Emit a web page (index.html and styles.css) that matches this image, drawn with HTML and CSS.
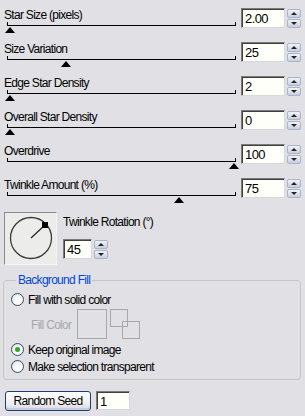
FILE: index.html
```html
<!DOCTYPE html>
<html lang="en">
<head>
    <meta charset="UTF-8">
    <title>Star Effect</title>
    <link rel="stylesheet" href="styles.css">
</head>
<body>
    <div class="panel">
        <div class="row">
            <div class="slider-col">
                <div class="label">Star Size (pixels)</div>
                <div class="track"><span class="thumb" style="left: 3px"></span></div>
            </div>
            <div class="num"><input class="field" type="text" value="2.00"><div class="spin"><span class="up"></span><span class="down"></span></div></div>
        </div>
        <div class="row">
            <div class="slider-col">
                <div class="label">Size Variation</div>
                <div class="track"><span class="thumb" style="left: 59px"></span></div>
            </div>
            <div class="num"><input class="field" type="text" value="25"><div class="spin"><span class="up"></span><span class="down"></span></div></div>
        </div>
        <div class="row">
            <div class="slider-col">
                <div class="label">Edge Star Density</div>
                <div class="track"><span class="thumb" style="left: 3px"></span></div>
            </div>
            <div class="num"><input class="field" type="text" value="2"><div class="spin"><span class="up"></span><span class="down"></span></div></div>
        </div>
        <div class="row">
            <div class="slider-col">
                <div class="label">Overall Star Density</div>
                <div class="track"><span class="thumb" style="left: 3px"></span></div>
            </div>
            <div class="num"><input class="field" type="text" value="0"><div class="spin"><span class="up"></span><span class="down"></span></div></div>
        </div>
        <div class="row">
            <div class="slider-col">
                <div class="label">Overdrive</div>
                <div class="track"><span class="thumb" style="left: 227px"></span></div>
            </div>
            <div class="num"><input class="field" type="text" value="100"><div class="spin"><span class="up"></span><span class="down"></span></div></div>
        </div>
        <div class="row">
            <div class="slider-col">
                <div class="label">Twinkle Amount (%)</div>
                <div class="track"><span class="thumb" style="left: 172px"></span></div>
            </div>
            <div class="num"><input class="field" type="text" value="75"><div class="spin"><span class="up"></span><span class="down"></span></div></div>
        </div>

        <div class="rotation">
            <div class="dial">
                <svg width="51" height="51" viewBox="0 0 51 51">
                    <circle cx="26" cy="25" r="20.5" fill="none" stroke="#3a3a3a" stroke-width="1.3"/>
                    <line x1="26" y1="25" x2="40" y2="12" stroke="#222" stroke-width="1.2"/>
                    <rect x="37" y="9" width="6" height="6" fill="#000"/>
                </svg>
            </div>
            <div class="rotation-ctrl">
                <div class="label">Twinkle Rotation (°)</div>
                <div class="num"><input class="field small" type="text" value="45"><div class="spin"><span class="up"></span><span class="down"></span></div></div>
            </div>
        </div>

        <fieldset class="group">
            <legend>Background Fill</legend>
            <label class="radio"><span class="dot"></span>Fill with solid color</label>
            <div class="fill-row">
                <span class="fill-label">Fill Color</span>
                <span class="swatch"></span>
                <span class="swap"><span class="sq"></span><span class="sq back"></span></span>
            </div>
            <label class="radio"><span class="dot checked"></span>Keep original image</label>
            <label class="radio"><span class="dot"></span>Make selection transparent</label>
        </fieldset>

        <div class="seed">
            <button class="btn">Random Seed</button>
            <input class="field seed-field" type="text" value="1">
        </div>
    </div>
</body>
</html>
```

FILE: styles.css
```css
* {
    margin: 0;
    padding: 0;
    box-sizing: border-box;
}

body {
    background: #e0e0e5;
    font-family: 'Liberation Sans', Arial, sans-serif;
    font-size: 12px;
    letter-spacing: -0.7px;
    color: #000;
}

.panel {
    width: 305px;
    height: 416px;
    padding: 8px 0 0 4px;
}

.row {
    display: flex;
    height: 34px;
}

.slider-col {
    width: 237px;
}

.label {
    height: 14px;
    line-height: 14px;
    white-space: nowrap;
}

.track {
    position: relative;
    margin: 0 0 0 3px;
    width: 229px;
    height: 4px;
    border: 1px solid #000;
    border-top: none;
}

.thumb {
    position: absolute;
    top: 5px;
    margin-left: -6px;
    width: 0;
    height: 0;
    border-left: 5.5px solid transparent;
    border-right: 5.5px solid transparent;
    border-bottom: 6px solid #000;
}

.num {
    display: flex;
    gap: 2px;
    height: 20px;
}

.field {
    width: 44px;
    height: 20px;
    border: 1px solid;
    border-color: #7a7a7a #d8d8d8 #d8d8d8 #7a7a7a;
    box-shadow: inset 1px 1px 0 #404040;
    background: #fffffa;
    font-family: inherit;
    font-size: 13px;
    letter-spacing: -0.6px;
    padding: 1px 0 0 3px;
    outline: none;
}

.field.small {
    width: 29px;
}

.spin {
    display: flex;
    flex-direction: column;
    gap: 1px;
    width: 14px;
    padding-top: 1px;
}

.spin span {
    position: relative;
    height: 9px;
    border: 1px solid #a8b4c8;
    border-radius: 2px;
    background: linear-gradient(#f2f3f8, #c9cfe0);
}

.spin span::after {
    content: "";
    position: absolute;
    left: 3px;
    top: 2px;
    border-left: 3px solid transparent;
    border-right: 3px solid transparent;
}

.spin .up::after {
    border-bottom: 3px solid #222;
}

.spin .down::after {
    border-top: 3px solid #222;
}

.rotation {
    display: flex;
    gap: 6px;
}

.dial {
    width: 53px;
    height: 53px;
    border: 1px solid;
    border-color: #8a8a8a #f4f4f4 #f4f4f4 #8a8a8a;
    background: #ececea;
}

.rotation-ctrl .label {
    margin: 3px 0 10px;
}

.group {
    margin: 9px 0 0 -1px;
    width: 298px;
    height: 106px;
    border: 1px solid #c5c5c2;
    border-radius: 4px;
    padding: 4px 0 0 7px;
}

.group legend {
    margin-left: 5px;
    padding: 0 2px;
    color: #0046d5;
    line-height: 13px;
}

.radio {
    display: flex;
    align-items: center;
    gap: 4px;
    height: 17px;
}

.dot {
    position: relative;
    width: 13px;
    height: 13px;
    border: 1px solid #2c4e6f;
    border-radius: 50%;
    background: radial-gradient(circle at 65% 65%, #fff 0%, #fff 30%, #d8d8d0 100%);
}

.dot.checked::after {
    content: "";
    position: absolute;
    left: 3px;
    top: 3px;
    width: 5px;
    height: 5px;
    border-radius: 50%;
    background: #2ca82c;
}

.fill-row {
    display: flex;
    align-items: flex-start;
    height: 33px;
    padding-top: 1px;
}

.fill-label {
    width: 46px;
    margin: 9px 0 0 20px;
    color: #a8a8a8;
}

.swatch {
    width: 30px;
    height: 30px;
    border: 1px solid #a8a8a8;
}

.swap {
    position: relative;
    width: 30px;
    height: 30px;
    margin-left: 3px;
}

.sq {
    position: absolute;
    left: 0;
    top: 0;
    width: 18px;
    height: 18px;
    border: 1px solid #a8a8a8;
    background: #e0e0e5;
}

.sq.back {
    left: 12px;
    top: 12px;
    background: transparent;
}

.seed {
    display: flex;
    gap: 5px;
    margin: 11px 0 0 1px;
}

.btn {
    width: 86px;
    height: 20px;
    border: 1px solid #1e3f72;
    border-radius: 3px;
    background: linear-gradient(#ffffff, #ececf0 70%, #d4d4dc);
    box-shadow: inset 0 -2px 0 #c8cce0;
    font-family: inherit;
    font-size: 12px;
    letter-spacing: -0.7px;
    color: #000;
}

.seed-field {
    width: 34px;
    height: 19px;
}
```
